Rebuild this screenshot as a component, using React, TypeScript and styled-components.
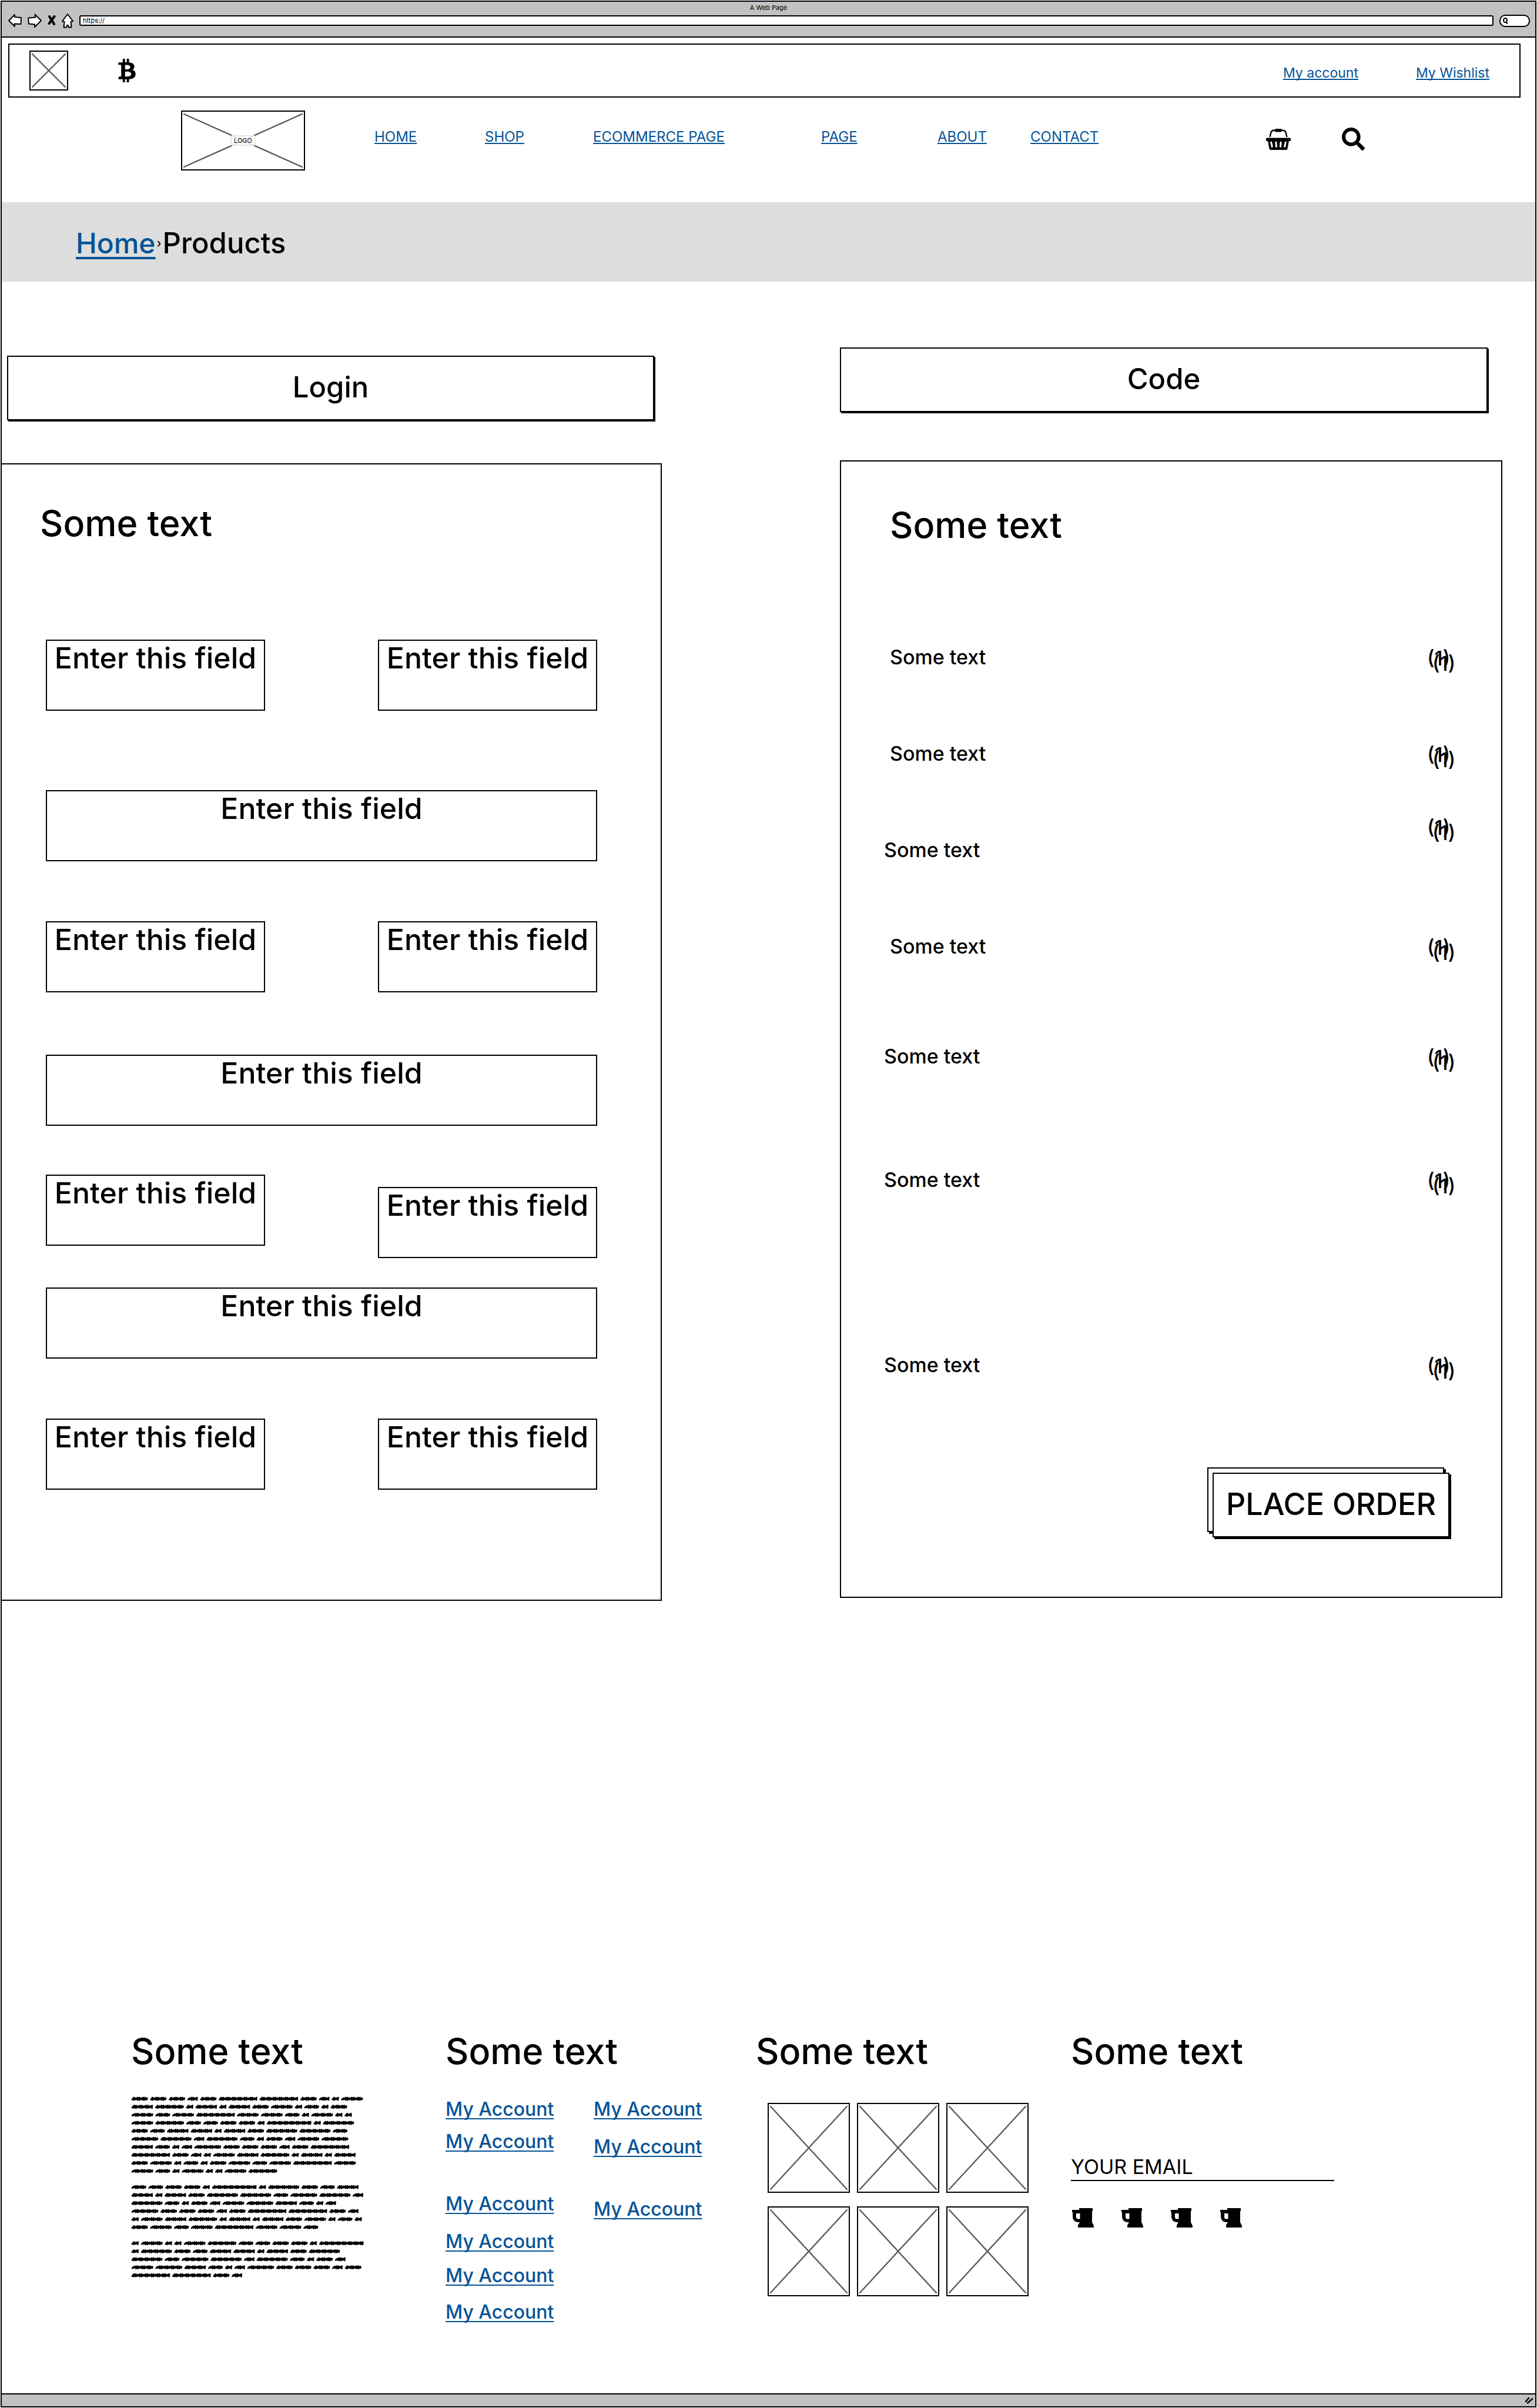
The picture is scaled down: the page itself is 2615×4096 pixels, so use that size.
import React from "react";
import styled, { createGlobalStyle, css } from "styled-components";
import { FaBtc, FaSearch } from "react-icons/fa";

const ink = "#000000";
const link = "#045397";
const chrome = "#c2c2c2";

const GlobalStyle = createGlobalStyle`
  *, *::before, *::after { box-sizing: border-box; }
  body {
    margin: 0;
    background: #ffffff;
    color: ${ink};
    font-family: Inter, "Liberation Sans", sans-serif;
    font-size: 24px;
  }
  h2, ul { margin: 0; padding: 0; }
  ul { list-style: none; }
  button, input { font: inherit; color: inherit; margin: 0; border-radius: 0; }
  svg { display: block; }
`;

const Frame = styled.div`
  display: flex;
  flex-direction: column;
  min-height: calc(100vh - 2px);
  margin: 1px;
  border: 2px solid ${ink};
`;

/* ---------- browser chrome ---------- */

const Chrome = styled.div`
  height: 61px;
  border-bottom: 2px solid ${ink};
  background: ${chrome};
`;

const WindowTitle = styled.div`
  font-size: 11px;
  line-height: 20px;
  text-align: center;
`;

const Toolbar = styled.div`
  display: flex;
  align-items: center;
  gap: 10px;
  height: 24px;
  padding: 0 9px 0 11px;
`;

const PlainButton = styled.button`
  display: block;
  padding: 0;
  border: 0;
  background: none;
`;

const AddressBar = styled.input`
  flex: 1;
  min-width: 0;
  height: 18px;
  padding: 0 4px;
  border: 2px solid ${ink};
  border-radius: 3px;
  background: #ffffff;
  font-size: 11px;
`;

const SearchPill = styled.label`
  display: flex;
  align-items: center;
  width: 52px;
  height: 21px;
  padding-left: 4px;
  border: 2px solid ${ink};
  border-radius: 10px;
  background: #ffffff;

  input {
    width: 30px;
    height: 14px;
    padding: 0;
    border: 0;
    outline: 0;
    background: none;
    font-size: 11px;
  }
`;

const StatusBar = styled.div`
  display: flex;
  justify-content: flex-end;
  align-items: center;
  height: 22px;
  margin-top: auto;
  padding-right: 3px;
  border-top: 2px solid ${ink};
  background: ${chrome};
`;

/* ---------- shared parts ---------- */

const Link = styled.a<{ $size?: "small" | "nav" | "medium" | "large" }>`
  color: ${link};
  text-decoration: underline;
  text-decoration-skip-ink: none;
  white-space: nowrap;
  ${({ $size = "small" }) =>
    ({
      small: css`
        font-size: 23px;
        line-height: 30px;
        text-decoration-thickness: 2px;
        text-underline-offset: 2px;
      `,
      nav: css`
        font-size: 24px;
        line-height: 30px;
        text-decoration-thickness: 2px;
        text-underline-offset: 2px;
      `,
      medium: css`
        font-size: 32px;
        font-weight: 500;
        line-height: 40px;
        text-decoration-thickness: 2px;
        text-underline-offset: 4px;
      `,
      large: css`
        font-size: 48px;
        font-weight: 500;
        line-height: 60px;
        text-decoration-thickness: 4px;
        text-underline-offset: 6px;
      `,
    })[$size]}
`;

const Heading = styled.h2`
  font-size: 61px;
  font-weight: 500;
  line-height: 72px;
  white-space: nowrap;
`;

const ImageBox = styled.div<{ $w: number; $h: number }>`
  display: grid;
  place-items: center;
  width: ${({ $w }) => $w}px;
  height: ${({ $h }) => $h}px;
  border: 2px solid ${ink};

  > * {
    grid-area: 1 / 1;
  }
`;

const ImageCaption = styled.span`
  padding: 0 4px;
  border: 2px solid #e6e6e6;
  border-radius: 4px;
  background: rgba(255, 255, 255, 0.85);
  font-size: 11px;
  line-height: 14px;
`;

function Placeholder({ w, h, caption }: { w: number; h: number; caption?: string }) {
  const iw = w - 4;
  const ih = h - 4;
  return (
    <ImageBox $w={w} $h={h}>
      <svg width={iw} height={ih} viewBox={`0 0 ${iw} ${ih}`} stroke="#5a5a5a" strokeWidth="2.4" strokeLinecap="round" aria-hidden="true">
        <path d={`M3 4L${iw - 3} ${ih - 4}M${iw - 3} 4L3 ${ih - 4}`} />
      </svg>
      {caption && <ImageCaption>{caption}</ImageCaption>}
    </ImageBox>
  );
}

/* ---------- header ---------- */

const TopBar = styled.div`
  display: flex;
  align-items: center;
  height: 92px;
  margin: 10px 25px 0 11px;
  padding: 0 51px 0 34px;
  border: 2px solid ${ink};
`;

const Currency = styled.div`
  margin-left: 80px;
`;

const TopLinks = styled.nav`
  display: flex;
  gap: 98px;
  margin-left: auto;
  padding-top: 8px;
`;

const Header = styled.header`
  display: grid;
  grid-template-columns: 211px 1fr 168px;
  column-gap: 118px;
  align-items: start;
  height: 156px;
  margin-top: 22px;
  padding: 0 290px 0 305px;
  flex: none;
`;

const Nav = styled.nav`
  display: grid;
  grid-template-columns: 188fr 184fr 388fr 198fr 158fr 283fr;
  padding-top: 30px;
`;

const Tools = styled.div`
  display: flex;
  justify-content: space-between;
  align-items: center;
  padding-top: 29px;
`;

const Breadcrumb = styled.nav`
  display: flex;
  align-items: center;
  height: 135px;
  padding: 5px 0 0 126px;
  background: #dddddd;
  font-size: 49px;
  font-weight: 500;
  line-height: 60px;
`;

const Separator = styled.span`
  padding: 0 2px;
  font-size: 20px;
`;

/* ---------- main ---------- */

const Main = styled.main`
  display: grid;
  grid-template-columns: 1123fr 1127fr;
  column-gap: 303px;
  align-items: start;
  padding-right: 56px;
`;

const Column = styled.section<{ $top: number; $gap: number }>`
  display: flex;
  flex-direction: column;
  gap: ${({ $gap }) => $gap}px;
  padding-top: ${({ $top }) => $top}px;
`;

const SolidButton = styled.button`
  height: 110px;
  padding: 0 0 2px;
  border: 2px solid ${ink};
  box-shadow: 2px 2px 0 ${ink};
  background: #ffffff;
  font-size: 49px;
  font-weight: 500;
  line-height: 60px;
  white-space: nowrap;
`;

const LoginButton = styled(SolidButton)`
  margin: 0 13px 0 9px;
`;

const CodeButton = styled(SolidButton)`
  margin-right: 25px;
`;

const LoginPanel = styled.form`
  padding: 64px 108px 187px 65px;
  border: solid ${ink};
  border-width: 2px 2px 2px 0;
`;

const Fields = styled.div`
  padding: 162px 0 0 10px;
`;

const FieldRow = styled.div<{ $gap: number }>`
  display: flex;
  justify-content: space-between;
  align-items: flex-start;
  margin-top: ${({ $gap }) => $gap}px;
`;

const Field = styled.input<{ $wide?: boolean; $drop?: number }>`
  flex: 0 1 ${({ $wide }) => ($wide ? "100%" : "373px")};
  min-width: 0;
  height: 121px;
  margin-top: ${({ $drop = 0 }) => $drop}px;
  padding: 0 0 60px;
  border: 2px solid ${ink};
  background: #ffffff;
  font-size: 50px;
  font-weight: 500;
  text-align: center;

  &::placeholder {
    color: ${ink};
    opacity: 1;
  }
`;

const OrderPanel = styled.div`
  display: flex;
  flex-direction: column;
  padding: 72px 75px 101px 73px;
  border: 2px solid ${ink};

  h2 {
    padding-left: 10px;
  }
`;

const OrderList = styled.ul`
  padding-top: 169px;
`;

const OrderRow = styled.li<{ $gap: number; $inset?: boolean; $tall?: boolean }>`
  display: flex;
  justify-content: space-between;
  height: ${({ $tall }) => ($tall ? 80 : 40)}px;
  margin-top: ${({ $gap }) => $gap}px;
  padding-left: ${({ $inset }) => ($inset ? 10 : 0)}px;
  font-size: 34px;
  font-weight: 500;
  line-height: 40px;
`;

const OrderLabel = styled.span`
  align-self: flex-end;
`;

const Amount = styled.span`
  position: relative;
  width: 51px;
  height: 40px;
  padding-top: 2px;
`;

const AmountOverlay = styled.span`
  position: absolute;
  left: 9px;
  top: 11px;
`;

const PlaceOrder = styled(SolidButton)`
  position: relative;
  align-self: flex-end;
  width: 403px;
  margin: 163px 13px 0 0;
  box-shadow: 3px 3px 0 ${ink};
  isolation: isolate;
  background: none;
  font-size: 52px;

  &::before,
  &::after {
    content: "";
    position: absolute;
    border: 2px solid ${ink};
    background: #ffffff;
  }
  &::before {
    inset: -11px 7px 7px -11px;
    box-shadow: 3px 3px 0 ${ink};
    z-index: -2;
  }
  &::after {
    inset: -2px;
    z-index: -1;
  }
`;

/* ---------- footer ---------- */

const Footer = styled.footer`
  display: grid;
  grid-template-columns: 535fr 528fr 536fr 448fr;
  margin-top: 730px;
  padding: 0 342px 80px 220px;
`;

const Copy = styled.div`
  padding-top: 38px;
`;

const LinkColumns = styled.div`
  display: grid;
  grid-template-columns: 252px auto;
  justify-content: start;
  align-items: start;
  padding-top: 43px;
`;

const LinkItem = styled.li<{ $gap: number }>`
  height: 40px;
  margin-top: ${({ $gap }) => $gap}px;
  line-height: 40px;
`;

const Gallery = styled.div`
  display: grid;
  grid-template-columns: repeat(3, 140px);
  gap: 23px 12px;
  padding: 52px 0 0 20px;
`;

const Email = styled.input`
  display: block;
  width: 100%;
  height: 48px;
  margin-top: 137px;
  padding: 0;
  border: solid ${ink};
  border-width: 0 0 2px;
  background: none;
  font-size: 34px;

  &::placeholder {
    color: ${ink};
    opacity: 1;
  }
`;

const Socials = styled.div`
  display: flex;
  gap: 47px;
  padding: 46px 0 0 2px;
`;

/* ---------- drawings ---------- */

const outline = { fill: "#ffffff", stroke: ink, strokeWidth: 2, strokeLinejoin: "round" as const };

const BackIcon = () => (
  <svg width="23" height="24" viewBox="0 0 23 24" {...outline} aria-hidden="true">
    <path d="M1 12L11 2V6L22 7L21.5 18L10.500 17.500L11 22Z" />
  </svg>
);

const ForwardIcon = () => (
  <svg width="24" height="24" viewBox="0 0 24 24" {...outline} aria-hidden="true">
    <path d="M1 7.500L13 6.500L12.500 1.500L23 12L12 23V18.500L2 17.500Z" />
  </svg>
);

const StopIcon = () => (
  <svg width="14" height="20" viewBox="0 0 14 20" stroke={ink} strokeWidth="4" strokeLinecap="round" aria-hidden="true">
    <path d="M3 3L11 16M11.500 3L2.500 15" />
  </svg>
);

const HomeIcon = () => (
  <svg width="20" height="25" viewBox="0 0 20 25" {...outline} aria-hidden="true">
    <path d="M10 1L19 13L15.500 14L16.500 23.500H12L11 20H9L8 23.500H3.500L4.500 14L1 13Z" />
  </svg>
);

const PillSearchIcon = () => (
  <svg width="9" height="11" viewBox="0 0 9 11" fill="none" stroke={ink} strokeWidth="2" aria-hidden="true">
    <ellipse cx="4" cy="4.500" rx="3" ry="3.500" />
    <path d="M5 7.500L8 10.500" />
  </svg>
);

const GripIcon = () => (
  <svg width="15" height="12" viewBox="0 0 15 12" stroke={ink} strokeWidth="2.600" strokeLinecap="round" aria-hidden="true">
    <path d="M2 8L7 2M5 10.500L13 3.500" />
  </svg>
);

const BasketIcon = () => (
  <svg width="42" height="36" viewBox="0 0 42 36" aria-hidden="true">
    <path d="M6.500 14L8.500 6Q9.500 3 13 2.800H29Q32.500 3 33.500 6L35.500 14" fill="none" stroke={ink} strokeWidth="2.400" />
    <rect x="15" y="0" width="12" height="5.500" rx="2" />
    <rect x="0" y="15.500" width="42" height="5.500" rx="1.500" />
    <path d="M3 20H39L36.500 34Q36 36 34 36H8Q6 36 5.500 34Z" />
    <path d="M8.500 22L10.500 31.500M16.800 22L17.600 31.500M25.200 22L24.400 31.500M33.500 22L31.500 31.500" stroke="#ffffff" strokeWidth="3" />
  </svg>
);

const MugIcon = () => (
  <svg width="37" height="33" viewBox="0 0 37 33" fillRule="evenodd" aria-hidden="true">
    <path d="M0 3H12V0H35V5H34V24L37 30V33H10V29L13 24H11C4 24 1 19 1 14V7H0ZM7 9V15Q7 18.500 10.500 18.500H13.500V9Z" />
  </svg>
);

/* Word widths of the scribbled filler copy, one letter per kind of word. */
const wordWidth: Record<string, number> = {
  A: 27.5, B: 17.5, C: 65.2, D: 11.9, E: 36.5, F: 36.1, G: 48.3, H: 24.6, I: 52.4, J: 75.3, K: 45.2,
};

const copyLines = [
  "AAABACCABDE", "FGDFDFAEDHDA", "EHECEEHDEDD", "EGHHAADJDI", "AHFFDFAIIH",
  "KIBIHDABEK", "FHDBKAAABAC", "CABDEFGDFDF", "AEDHDAEHECE", "EHDEDDEG", "",
  "HHAADJDIAHF", "FDFAIIHKIB", "IHDABEKFHDB", "KAAABACCAB", "DEFGDFDFAEDHD", "AEHECEEH", "",
  "DEDDEGHHAADJ", "DIAHFFDFAI", "IHKIBIHDAB", "EKFHDBKAAABA", "CCAB",
];

function scribble(line: string, y: number) {
  let x = 2;
  let d = "";
  for (const kind of line) {
    const w = wordWidth[kind] - 2;
    const steps = Math.max(3, Math.round(w / 3.4));
    const step = w / steps;
    d += `M${x.toFixed(1)} ${(y + 1.3).toFixed(1)}`;
    for (let i = 0; i < steps; i++) {
      const lift = (i * 7 + kind.charCodeAt(0)) % 3 === 0 ? 1.1 : 2;
      const px = x + step * (i + 0.9);
      d += `L${px.toFixed(1)} ${(y - lift).toFixed(1)}L${(px + step * 0.1 - 0.6).toFixed(1)} ${(y + lift).toFixed(1)}`;
    }
    x += wordWidth[kind] + 4.2;
  }
  return d;
}

const ScribbledCopy = () => (
  <svg width="402" height="314" viewBox="0 0 402 314" fill="none" stroke={ink} strokeWidth="2.800" strokeLinecap="round" strokeLinejoin="round" role="img" aria-label="Filler copy">
    {copyLines.map((line, i) => (
      <path key={i} d={scribble(line, 7 + i * 13.65)} />
    ))}
  </svg>
);

/* ---------- content ---------- */

const navItems = ["HOME", "SHOP", "ECOMMERCE PAGE", "PAGE", "ABOUT", "CONTACT"];

const fieldRows: { gap: number; wide?: boolean; drop?: number }[] = [
  { gap: 0 },
  { gap: 135, wide: true },
  { gap: 102 },
  { gap: 106, wide: true },
  { gap: 83, drop: 21 },
  { gap: 50, wide: true },
  { gap: 102 },
];

const orderRows: { gap: number; inset?: boolean; tall?: boolean }[] = [
  { gap: 0, inset: true },
  { gap: 124, inset: true },
  { gap: 84, tall: true },
  { gap: 124, inset: true },
  { gap: 147 },
  { gap: 170 },
  { gap: 275 },
];

const accountLinks = [
  [0, 15, 66, 24, 18, 22],
  [0, 24, 66],
];

export default function App() {
  return (
    <>
      <GlobalStyle />
      <Frame>
        <Chrome>
          <WindowTitle>A Web Page</WindowTitle>
          <Toolbar>
            <PlainButton aria-label="Back"><BackIcon /></PlainButton>
            <PlainButton aria-label="Forward"><ForwardIcon /></PlainButton>
            <PlainButton aria-label="Stop"><StopIcon /></PlainButton>
            <PlainButton aria-label="Home page"><HomeIcon /></PlainButton>
            <AddressBar aria-label="Address" defaultValue="https://" />
            <SearchPill>
              <PillSearchIcon />
              <input type="search" aria-label="Search the web" />
            </SearchPill>
          </Toolbar>
        </Chrome>

        <TopBar>
          <Placeholder w={66} h={68} />
          <Currency><FaBtc size={40} aria-label="Bitcoin" /></Currency>
          <TopLinks>
            <Link href="#account">My account</Link>
            <Link href="#wishlist">My Wishlist</Link>
          </TopLinks>
        </TopBar>

        <Header>
          <Placeholder w={211} h={102} caption="LOGO" />
          <Nav>
            {navItems.map((item) => (
              <span key={item}><Link href="#nav" $size="nav">{item}</Link></span>
            ))}
          </Nav>
          <Tools>
            <PlainButton aria-label="Basket"><BasketIcon /></PlainButton>
            <PlainButton aria-label="Search"><FaSearch size={39} /></PlainButton>
          </Tools>
        </Header>

        <Breadcrumb aria-label="Breadcrumb">
          <Link href="#home" $size="large">Home</Link>
          <Separator>›</Separator>
          <span>Products</span>
        </Breadcrumb>

        <Main>
          <Column $top={126} $gap={73}>
            <LoginButton>Login</LoginButton>
            <LoginPanel>
              <Heading>Some text</Heading>
              <Fields>
                {fieldRows.map((row, i) => (
                  <FieldRow key={i} $gap={row.gap}>
                    <Field $wide={row.wide} placeholder="Enter this field" aria-label={`Field ${i + 1}`} />
                    {!row.wide && (
                      <Field $drop={row.drop} placeholder="Enter this field" aria-label={`Field ${i + 1}, second`} />
                    )}
                  </FieldRow>
                ))}
              </Fields>
            </LoginPanel>
          </Column>

          <Column $top={112} $gap={82}>
            <CodeButton>Code</CodeButton>
            <OrderPanel>
              <Heading>Some text</Heading>
              <OrderList>
                {orderRows.map((row, i) => (
                  <OrderRow key={i} $gap={row.gap} $inset={row.inset} $tall={row.tall}>
                    <OrderLabel>Some text</OrderLabel>
                    <Amount>
                      (1)
                      <AmountOverlay>(1)</AmountOverlay>
                    </Amount>
                  </OrderRow>
                ))}
              </OrderList>
              <PlaceOrder>PLACE ORDER</PlaceOrder>
            </OrderPanel>
          </Column>
        </Main>

        <Footer>
          <section>
            <Heading>Some text</Heading>
            <Copy><ScribbledCopy /></Copy>
          </section>
          <section>
            <Heading>Some text</Heading>
            <LinkColumns>
              {accountLinks.map((gaps, c) => (
                <ul key={c}>
                  {gaps.map((gap, i) => (
                    <LinkItem key={i} $gap={gap}>
                      <Link href="#account" $size="medium">My Account</Link>
                    </LinkItem>
                  ))}
                </ul>
              ))}
            </LinkColumns>
          </section>
          <section>
            <Heading>Some text</Heading>
            <Gallery>
              {Array.from({ length: 6 }, (_, i) => (
                <Placeholder key={i} w={140} h={153} />
              ))}
            </Gallery>
          </section>
          <section>
            <Heading>Some text</Heading>
            <Email type="email" placeholder="YOUR EMAIL" aria-label="Your email" />
            <Socials>
              {Array.from({ length: 4 }, (_, i) => (
                <PlainButton key={i} aria-label={`Social link ${i + 1}`}><MugIcon /></PlainButton>
              ))}
            </Socials>
          </section>
        </Footer>

        <StatusBar><GripIcon /></StatusBar>
      </Frame>
    </>
  );
}
